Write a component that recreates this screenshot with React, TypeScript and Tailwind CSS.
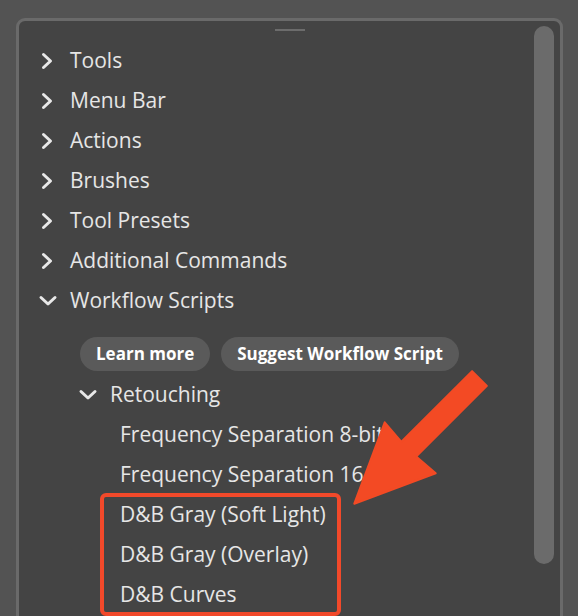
import React from "react";

const font = { fontFamily: '"Open Sans", "Noto Sans", sans-serif' };

function ChevronRight() {
  return (
    <svg width="20" height="20" viewBox="0 0 20 20" fill="none">
      <path d="M5.5 3.5 L12.5 10 L5.5 16.5" stroke="#e8e8e8" strokeWidth="3" strokeLinecap="round" strokeLinejoin="round" />
    </svg>
  );
}

function ChevronDown() {
  return (
    <svg width="20" height="20" viewBox="0 0 20 20" fill="none">
      <path d="M3 6.5 L10 13 L17 6.5" stroke="#e8e8e8" strokeWidth="3" strokeLinecap="round" strokeLinejoin="round" />
    </svg>
  );
}

function Row({ label, open, depth = 0 }: { label: string; open?: boolean; depth?: number }) {
  return (
    <div className="flex h-[40px] items-center" style={{ paddingLeft: 19 + depth * 40 }}>
      <div className="flex w-[32px] shrink-0">{open ? <ChevronDown /> : <ChevronRight />}</div>
      <span className="text-[21px] text-[#e6e6e6] whitespace-nowrap">{label}</span>
    </div>
  );
}

function Leaf({ label }: { label: string }) {
  return (
    <div className="flex h-[40px] items-center pl-[101px]">
      <span className="text-[21px] text-[#e6e6e6] whitespace-nowrap">{label}</span>
    </div>
  );
}

function Pill({ children }: { children: React.ReactNode }) {
  return (
    <button className="h-[34px] rounded-full bg-[#5a5a5a] px-[16px] text-[17px] font-bold text-white whitespace-nowrap">
      {children}
    </button>
  );
}

export default function App() {
  const sections = ["Tools", "Menu Bar", "Actions", "Brushes", "Tool Presets", "Additional Commands"];

  return (
    <div className="relative h-[616px] w-[578px] overflow-hidden bg-[#535353] pl-[16px] pt-[18px]" style={font}>
      <div className="relative flex h-[620px] w-[547px] rounded-t-[9px] border-[3px] border-b-0 border-[#6a6a6a] bg-[#444444]">
        {/* grip */}
        <div className="absolute left-1/2 top-[8px] h-[2px] w-[30px] -translate-x-1/2 bg-[#6c6c6c]" />

        <div className="flex flex-1 flex-col pt-[20px]">
          {sections.map((s) => (
            <Row key={s} label={s} />
          ))}
          <Row label="Workflow Scripts" open />
          <div className="mb-[4px] mt-[16px] flex gap-[11px] pl-[61px]">
            <Pill>Learn more</Pill>
            <Pill>Suggest Workflow Script</Pill>
          </div>
          <Row label="Retouching" open depth={1} />
          <Leaf label="Frequency Separation 8-bit" />
          <Leaf label="Frequency Separation 16-bit" />
          <Leaf label="D&B Gray (Soft Light)" />
          <Leaf label="D&B Gray (Overlay)" />
          <Leaf label="D&B Curves" />
        </div>

        {/* scrollbar */}
        <div className="mr-[6px] mt-[5px] h-[538px] w-[20px] shrink-0 rounded-full bg-[#6b6b6b]" />
      </div>

      {/* callout box */}
      <div className="absolute left-[100px] top-[493px] h-[123px] w-[241px] rounded-[6px] border-[4px] border-[#f2492a]" />

      {/* callout arrow */}
      <svg className="absolute left-0 top-0" width="578" height="616" viewBox="0 0 578 616">
        <polygon
          points="472.1,371.1 486.9,385.9 416.2,456.6 435.7,473.3 354.3,503.7 384.7,422.3 401.4,441.8"
          fill="#f34a24"
          stroke="#f34a24"
          strokeWidth="2"
          strokeLinejoin="round"
        />
      </svg>
    </div>
  );
}
